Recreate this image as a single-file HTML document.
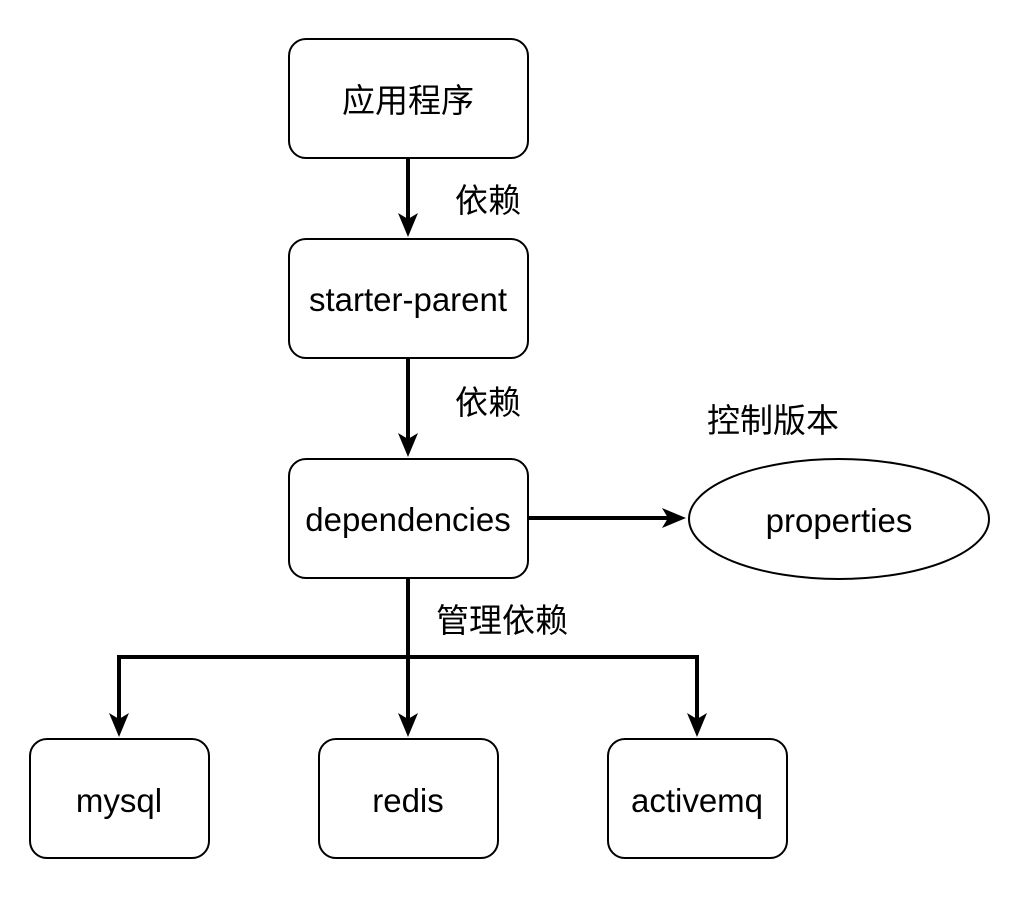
<!DOCTYPE html>
<html><head><meta charset="utf-8"><style>
html,body{margin:0;padding:0;background:#fff;}
svg text{font-family:"Liberation Sans","Noto Sans CJK SC",sans-serif;font-size:33px;fill:#000;}
</style></head><body>
<svg width="1020" height="910" xmlns="http://www.w3.org/2000/svg">
<g fill="#fff" stroke="#000" stroke-width="2">
<rect x="289" y="39" width="239" height="119" rx="17"/>
<rect x="289" y="239" width="239" height="119" rx="17"/>
<rect x="289" y="459" width="239" height="119" rx="17"/>
<ellipse cx="839" cy="519" rx="150" ry="60"/>
<rect x="30" y="739" width="179" height="119" rx="17"/>
<rect x="319" y="739" width="179" height="119" rx="17"/>
<rect x="608" y="739" width="179" height="119" rx="17"/>
</g>
<g stroke="#000" stroke-width="4" fill="none">
<path d="M408 158V220"/>
<path d="M408 358V440"/>
<path d="M528 518H668"/>
<path d="M408 578V720M119 720V657H697V720"/>
</g>
<g fill="#000">
<path d="M408 237L398 213L408 219L418 213Z"/>
<path d="M408 457L398 433L408 439L418 433Z"/>
<path d="M686 518L662 508L668 518L662 528Z"/>
<path d="M408 737L398 713L408 719L418 713Z"/>
<path d="M119 737L109 713L119 719L129 713Z"/>
<path d="M697 737L687 713L697 719L707 713Z"/>
</g>
<g text-anchor="middle">
<text x="408" y="112">应用程序</text>
<text x="408" y="311">starter-parent</text>
<text x="408" y="531">dependencies</text>
<text x="839" y="532">properties</text>
<text x="119" y="812">mysql</text>
<text x="408" y="812">redis</text>
<text x="697" y="812">activemq</text>
</g>
<text x="455" y="212">依赖</text>
<text x="455" y="414">依赖</text>
<text x="707" y="432">控制版本</text>
<text x="436" y="632">管理依赖</text>
</svg>
</body></html>
